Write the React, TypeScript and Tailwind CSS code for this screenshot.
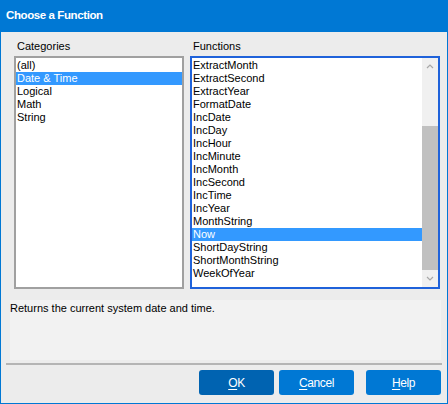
import React from "react";

const categories = ["(all)", "Date & Time", "Logical", "Math", "String"];
const functions = [
  "ExtractMonth",
  "ExtractSecond",
  "ExtractYear",
  "FormatDate",
  "IncDate",
  "IncDay",
  "IncHour",
  "IncMinute",
  "IncMonth",
  "IncSecond",
  "IncTime",
  "IncYear",
  "MonthString",
  "Now",
  "ShortDayString",
  "ShortMonthString",
  "WeekOfYear",
];

function Row({ text, selected }: { text: string; selected: boolean }) {
  return (
    <div
      className={
        "h-[13px] leading-[13px] pl-[1px] whitespace-nowrap " +
        (selected ? "bg-[#3399ff] text-white" : "text-black")
      }
    >
      {text}
    </div>
  );
}

function Btn({ label, first, dark }: { label: string; first: string; dark?: boolean }) {
  return (
    <button
      className={
        "w-[75px] h-[25px] rounded-[3px] text-white text-[12px] tracking-[-0.4px] flex items-center justify-center " +
        (dark ? "bg-[#0063b1]" : "bg-[#0078d4]")
      }
    >
      <span>
        <span className="underline underline-offset-2">{first}</span>
        {label.slice(first.length)}
      </span>
    </button>
  );
}

export default function App() {
  return (
    <div
      className="w-[448px] h-[404px] bg-[#0078d4] flex flex-col text-[11px]"
      style={{ fontFamily: '"Liberation Sans", Arial, sans-serif' }}
    >
      <div className="h-[32px] flex items-center pl-[6px] text-white font-bold text-[11.5px] tracking-[-0.4px]">
        Choose a Function
      </div>
      <div className="flex-1 mx-[1px] mb-[1px] bg-[#ececec] flex flex-col">
        <div className="flex pl-[13px] pr-[7px] pt-[8px] gap-[6px]">
          <div className="w-[170px] flex flex-col">
            <div className="h-[16px] pl-[3px] leading-[13px] text-black">Categories</div>
            <div className="h-[233px] border-2 border-[#a0a0a0] bg-white pt-[1px]">
              {categories.map((c) => (
                <Row key={c} text={c} selected={c === "Date & Time"} />
              ))}
            </div>
          </div>
          <div className="w-[250px] flex flex-col">
            <div className="h-[16px] pl-[3px] leading-[13px] text-black">Functions</div>
            <div className="h-[233px] border-2 border-[#1f62da] bg-white flex">
              <div className="flex-1 pt-[1px]">
                {functions.map((f) => (
                  <Row key={f} text={f} selected={f === "Now"} />
                ))}
              </div>
              <div className="w-[16px] bg-[#f0f0f0] flex flex-col items-center">
                <div className="h-[17px] flex items-center justify-center">
                  <svg width="8" height="5" viewBox="0 0 8 5">
                    <path d="M1 4 L4 1 L7 4" stroke="#a8a8a8" strokeWidth="1.2" fill="none" />
                  </svg>
                </div>
                <div className="h-[51px]" />
                <div className="w-[16px] h-[144px] bg-[#c0c0c0]" />
                <div className="flex-1 flex items-center justify-center">
                  <svg width="8" height="5" viewBox="0 0 8 5">
                    <path d="M1 1 L4 4 L7 1" stroke="#a8a8a8" strokeWidth="1.2" fill="none" />
                  </svg>
                </div>
              </div>
            </div>
          </div>
        </div>
        <div className="ml-[9px] mr-[6px] mt-[11px] h-[60px] bg-[#f2f2f2] pl-[0px] pt-[2px] text-black leading-[13px]">
          Returns the current system date and time.
        </div>
        <div className="ml-[5px] mr-[5px] mt-[3px] h-[2px] bg-[#b4b4b4]" />
        <div className="flex justify-end gap-[5px] pr-[6px] mt-[5px]">
          <Btn label="OK" first="O" dark />
          <Btn label="Cancel" first="C" />
          <div className="w-[2px]" />
          <Btn label="Help" first="H" />
        </div>
      </div>
    </div>
  );
}
